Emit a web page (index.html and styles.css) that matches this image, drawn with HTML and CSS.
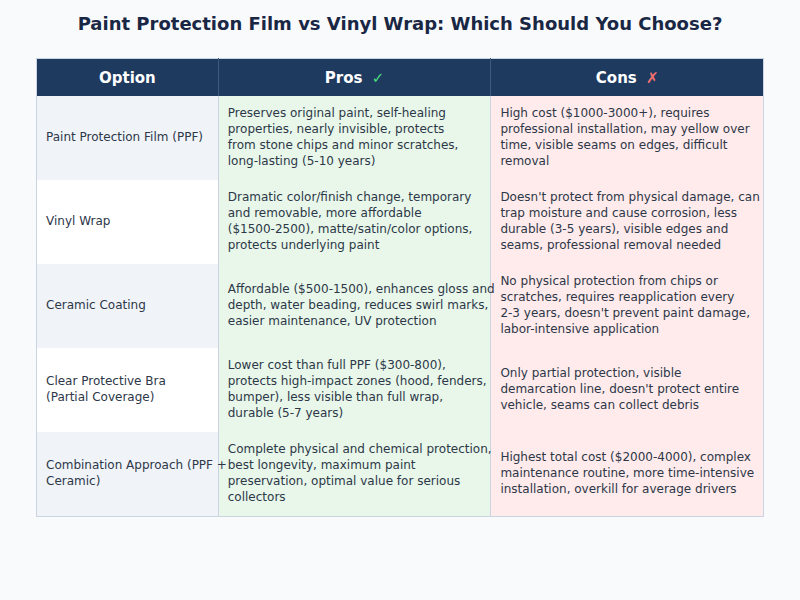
FILE: index.html
```html
<!DOCTYPE html>
<html>
<head>
<meta charset="utf-8">
<link rel="stylesheet" href="styles.css">
</head>
<body>
<div class="page">
  <h1 class="title">Paint Protection Film vs Vinyl Wrap: Which Should You Choose?</h1>
  <table class="compare">
    <colgroup>
      <col class="col-option">
      <col class="col-pros">
      <col class="col-cons">
    </colgroup>
    <thead>
      <tr>
        <th>Option</th>
        <th>Pros <span class="check">✓</span></th>
        <th>Cons <span class="cross">✗</span></th>
      </tr>
    </thead>
    <tbody>
      <tr>
        <td class="option">Paint Protection Film (PPF)</td>
        <td class="pros">Preserves original paint, self-healing<br>properties, nearly invisible, protects<br>from stone chips and minor scratches,<br>long-lasting (5-10 years)</td>
        <td class="cons">High cost ($1000-3000+), requires<br>professional installation, may yellow over<br>time, visible seams on edges, difficult<br>removal</td>
      </tr>
      <tr>
        <td class="option">Vinyl Wrap</td>
        <td class="pros">Dramatic color/finish change, temporary<br>and removable, more affordable<br>($1500-2500), matte/satin/color options,<br>protects underlying paint</td>
        <td class="cons">Doesn't protect from physical damage, can<br>trap moisture and cause corrosion, less<br>durable (3-5 years), visible edges and<br>seams, professional removal needed</td>
      </tr>
      <tr>
        <td class="option">Ceramic Coating</td>
        <td class="pros">Affordable ($500-1500), enhances gloss and<br>depth, water beading, reduces swirl marks,<br>easier maintenance, UV protection</td>
        <td class="cons">No physical protection from chips or<br>scratches, requires reapplication every<br>2-3 years, doesn't prevent paint damage,<br>labor-intensive application</td>
      </tr>
      <tr>
        <td class="option">Clear Protective Bra<br>(Partial Coverage)</td>
        <td class="pros">Lower cost than full PPF ($300-800),<br>protects high-impact zones (hood, fenders,<br>bumper), less visible than full wrap,<br>durable (5-7 years)</td>
        <td class="cons">Only partial protection, visible<br>demarcation line, doesn't protect entire<br>vehicle, seams can collect debris</td>
      </tr>
      <tr>
        <td class="option">Combination Approach (PPF +<br>Ceramic)</td>
        <td class="pros">Complete physical and chemical protection,<br>best longevity, maximum paint<br>preservation, optimal value for serious<br>collectors</td>
        <td class="cons">Highest total cost ($2000-4000), complex<br>maintenance routine, more time-intensive<br>installation, overkill for average drivers</td>
      </tr>
    </tbody>
  </table>
</div>
</body>
</html>
```
FILE: styles.css
```css
html, body {
  margin: 0;
  padding: 0;
  background: #f8fafc;
}
body {
  font-family: "DejaVu Sans", sans-serif;
  color: #2d3748;
}
.page {
  width: 800px;
  height: 600px;
  padding: 13px 36px 0;
  box-sizing: border-box;
}
.title {
  margin: 0 0 23px;
  font-size: 18px;
  line-height: 22px;
  font-weight: bold;
  text-align: center;
  color: #1a2744;
}
.compare {
  width: 728px;
  border-collapse: collapse;
  table-layout: fixed;
  border: 1px solid #cbd5e1;
  font-size: 12px;
  line-height: 16px;
}
.col-option { width: 25%; }
.col-pros { width: 37.5%; }
.col-cons { width: 37.5%; }
.compare th {
  background: #1e3a5f;
  color: #ffffff;
  font-size: 15px;
  font-weight: bold;
  height: 37px;
  padding: 1px 10px 0;
  box-sizing: border-box;
  text-align: center;
  border-left: 1px solid #3b5a80;
}
.compare th:first-child { border-left: none; }
.check { color: #4ade80; font-weight: normal; margin-left: 4px; }
.cross { color: #f87171; font-weight: normal; margin-left: 4px; }
.compare td {
  padding: 9px 10px 11px 9px;
  height: 84px;
  box-sizing: border-box;
  vertical-align: middle;
  white-space: nowrap;
  border-left: 1px solid #cbd5e1;
}
.compare td.option { border-left: none; }
.option { background: #f0f4f8; }
tbody tr:nth-child(even) .option { background: #ffffff; }
.pros { background: #e8f7ea; }
.cons { background: #ffebeb; }
```
